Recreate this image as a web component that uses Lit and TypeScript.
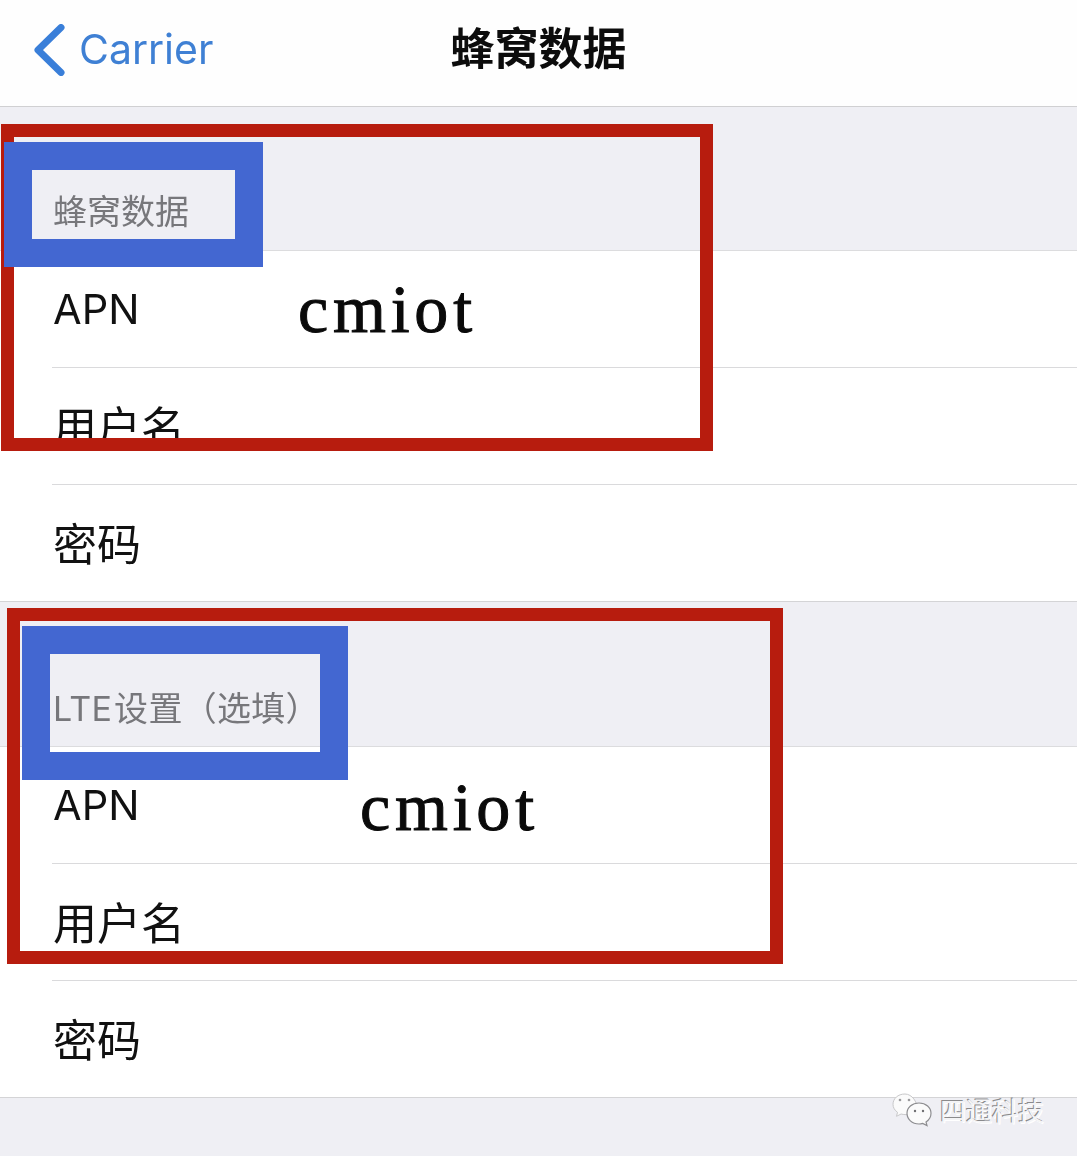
import { LitElement, html, css } from "lit";
import { customElement } from "lit/decorators.js";

@customElement("app-root")
export class AppRoot extends LitElement {
  static styles = css`
    :host { display: block; position: relative; width: 1077px; height: 1156px; overflow: hidden; background: #efeff4; font-family: Inter, "Noto Sans CJK SC", sans-serif; }
    .nav { height: 106px; background: #fefefe; border-bottom: 1px solid #d0d0d2; display: grid; grid-template-columns: 1fr auto 1fr; align-items: center; }
    .back { display: flex; align-items: center; gap: 11px; padding: 0 0 7px 32px; color: #3f80d4; font-size: 41px; line-height: 1; filter: blur(0.6px); }
    .back svg { width: 36px; height: 58px; flex: none; }
    .title { font-size: 44px; font-weight: 700; color: #0c0c0c; line-height: 1; margin-top: -9px; filter: blur(0.5px); }
    .head { height: 143px; border-bottom: 1px solid #dcdcde; display: flex; align-items: flex-end; padding-left: 53px; box-sizing: content-box; }
    .head.b { height: 144px; }
    .head span { display: block; height: 40px; line-height: 40px; margin-bottom: 18px; font-size: 34px; color: #77777b; filter: blur(0.5px); white-space: pre; word-spacing: -8px; }
    .head.b span { margin-bottom: 17px; letter-spacing: 0.3px; }
    .rows { background: #fff; border-bottom: 1px solid #d4d4d6; }
    .row { margin-left: 52px; display: flex; align-items: center; padding: 0 0 3px 1px; box-sizing: border-box; height: 117px; font-size: 44px; color: #111; border-bottom: 1px solid #dadadc; filter: blur(0.4px); }
    .row:last-child { border-bottom: 0; height: 116px; }
    .row.apn { font-size: 41.500px; padding-bottom: 1px; }
    .frame { position: absolute; box-sizing: border-box; border: 13px solid #b71c0e; }
    .f1 { left: 1px; top: 124px; width: 712px; height: 327px; }
    .f2 { left: 7px; top: 608px; width: 776px; height: 356px; }
    .tag { position: absolute; box-sizing: border-box; border-style: solid; border-color: #4367d1; }
    .t1 { left: 4px; top: 142px; width: 259px; height: 125px; border-width: 28px; }
    .t2 { left: 22px; top: 626px; width: 326px; height: 154px; border-width: 28px; }
    .val { position: absolute; font-family: "Liberation Serif", serif; font-size: 68px; line-height: 1; color: #0a0a0a; letter-spacing: 4.800px; -webkit-text-stroke: 1px #0a0a0a; }
    .v1 { left: 298px; top: 275px; }
    .v2 { left: 360px; top: 773px; }
    .mark { position: absolute; left: 891px; top: 1092px; display: flex; align-items: center; gap: 7px; color: #f4f4f6; font-size: 26px; line-height: 1; font-family: "Noto Sans CJK SC", sans-serif; text-shadow: -1px -1px 0 #8a8a8c, 1px 1px 0 #fff; }
    .mark svg { width: 42px; height: 36px; flex: none; }
  `;

  render() {
    return html`
      <div class="nav">
        <div class="back">
          <svg viewBox="0 0 36 58"><path d="M29 6.500 L6 29 L29 51.500" fill="none" stroke="#3a7fd9" stroke-width="7" stroke-linecap="round" stroke-linejoin="round"/></svg>
          <span>Carrier</span>
        </div>
        <div class="title">蜂窝数据</div>
        <div></div>
      </div>
      <div class="head"><span>蜂窝数据</span></div>
      <div class="rows">
        <div class="row apn">APN</div>
        <div class="row">用户名</div>
        <div class="row">密码</div>
      </div>
      <div class="head b"><span>LTE 设置（选填）</span></div>
      <div class="rows">
        <div class="row apn">APN</div>
        <div class="row">用户名</div>
        <div class="row">密码</div>
      </div>

      <div class="frame f1"></div>
      <div class="tag t1"></div>
      <div class="val v1">cmiot</div>
      <div class="frame f2"></div>
      <div class="tag t2"></div>
      <div class="val v2">cmiot</div>

      <div class="mark">
        <svg viewBox="0 0 42 36">
          <path d="M14 2C6.800 2 2 6.700 2 12.300c0 3.300 1.700 6 4.500 8l-1 4 4.600-2.300c1.500.4 2.700.6 4 .6 5 0 10-3 11.500-7 1-5-4.500-13.600-11.600-13.600z" fill="#fbfbfb" stroke="#c8c8ca" stroke-width="1"/>
          <path d="M28 11c-7 0-12 4.500-12 10.300S21 32 28 32c1.300 0 2.500-.2 3.700-.6l4.300 2.200-1-3.600c3-1.900 5-4.900 5-8.700C40 15.500 35 11 28 11z" fill="#fbfbfb" stroke="#8d8d90" stroke-width="1.200"/>
          <circle cx="9" cy="8" r="1.300" fill="#9a9a9c"/><circle cx="18" cy="8" r="1.300" fill="#9a9a9c"/>
          <circle cx="24" cy="19" r="1.200" fill="#6f6f72"/><circle cx="32" cy="19" r="1.200" fill="#6f6f72"/>
        </svg>
        <span>四通科技</span>
      </div>
    `;
  }
}
